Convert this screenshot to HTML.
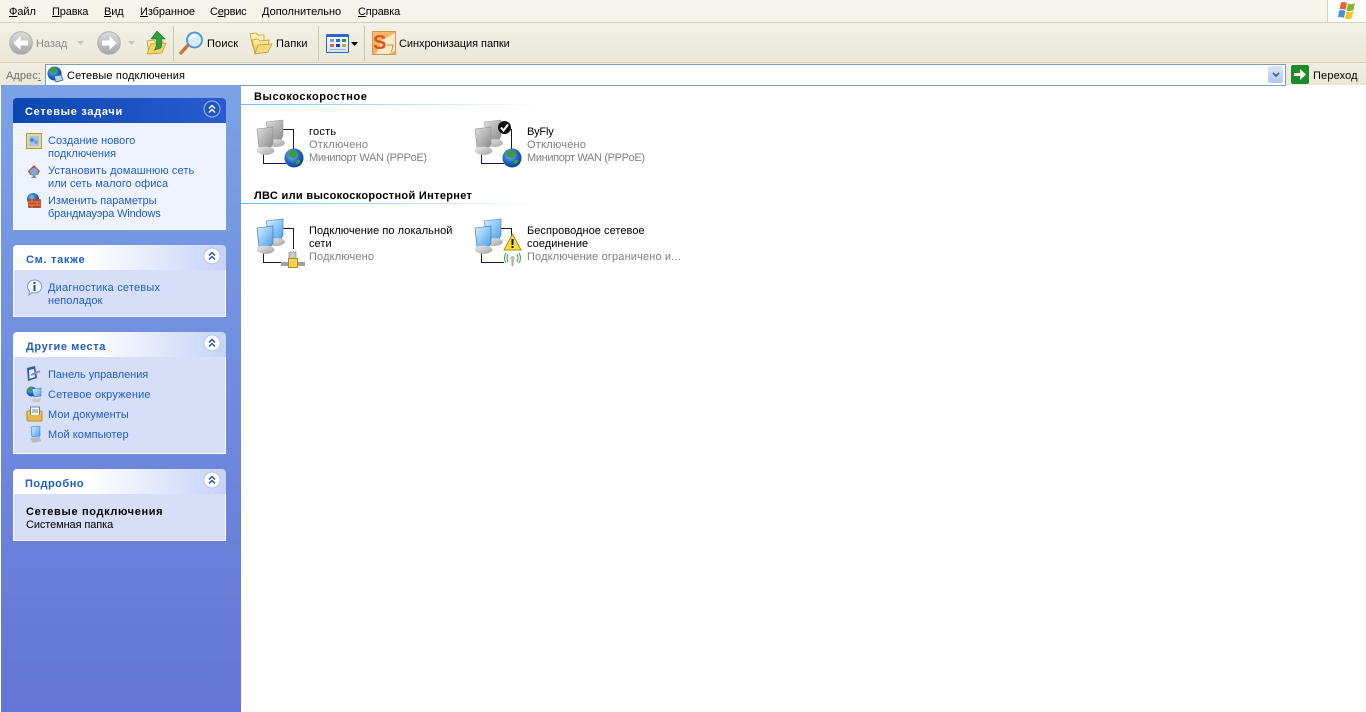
<!DOCTYPE html>
<html lang="ru"><head><meta charset="utf-8"><title>Сетевые подключения</title>
<style>
html,body{margin:0;padding:0;width:1366px;height:712px;overflow:hidden;background:#fff}
body{position:relative;font-family:"Liberation Sans","DejaVu Sans",sans-serif;font-size:11px;color:#000}
div,svg,span.t{position:absolute}
.t{white-space:nowrap;line-height:13px;letter-spacing:.05px;margin-top:1px}
u{text-decoration:underline}
.l{color:#215dc6}
.g{color:#7f7f7f}
.h{font-weight:bold;font-size:11px;letter-spacing:.35px}
.box{left:13px;width:211px;background:#d6dff7;border:1px solid #fff;border-top:0}
.hd{left:13px;width:213px;height:25px;border-radius:4px 4px 0 0;background:linear-gradient(90deg,#fff 0%,#fff 35%,#c6d3f7 100%)}
</style></head><body>
<svg width="0" height="0" style="left:0;top:0"><defs>
<linearGradient id="bs" x1="0" y1="0" x2="1" y2="1"><stop offset="0" stop-color="#d8f0ff"/><stop offset="1" stop-color="#4aa0ea"/></linearGradient>
<linearGradient id="gs" x1="0" y1="0" x2="1" y2="1"><stop offset="0" stop-color="#e0e0e0"/><stop offset="1" stop-color="#8a8a8a"/></linearGradient>
<linearGradient id="bb" x1="0" y1="0" x2="1" y2="1"><stop offset="0" stop-color="#eee"/><stop offset="1" stop-color="#a0a0a0"/></linearGradient>
<radialGradient id="gl" cx=".4" cy=".35" r=".7"><stop offset="0" stop-color="#7fc4f5"/><stop offset=".6" stop-color="#1a63c0"/><stop offset="1" stop-color="#0a3d8f"/></radialGradient>
<linearGradient id="fo" x1="0" y1="0" x2="0" y2="1"><stop offset="0" stop-color="#fff0a8"/><stop offset="1" stop-color="#e6bc4a"/></linearGradient>
<linearGradient id="ar" x1="0" y1="0" x2="0" y2="1"><stop offset="0" stop-color="#dcdcdc"/><stop offset="1" stop-color="#a6a6a6"/></linearGradient>
<symbol id="pcg" viewBox="0 0 48 48" overflow="visible">
<path d="M27 9.500H37.500V30M7.500 30V43.500H30" fill="none" stroke="#15154f" stroke-width="1"/>
<path d="M10 2 27 0V16L25 20 14 21Z" fill="url(#gs)" stroke="#999" stroke-width=".5"/>
<path d="M11 21C20 18 29 19 29 23 27 28 16 28 11 25Z" fill="url(#bb)"/>
<path d="M1 9 17 7V24L15 27 3 28Z" fill="url(#gs)" stroke="#8a8a8a" stroke-width=".5"/>
<path d="M1 28C8 26 18 26 18.500 31 16 36 6 36 1 32Z" fill="url(#bb)"/>
</symbol>
<symbol id="pcb" viewBox="0 0 48 48" overflow="visible">
<path d="M27 9.500H37.500V30M7.500 30V43.500H30" fill="none" stroke="#15154f" stroke-width="1"/>
<path d="M10 2 27 0V16L25 20 14 21Z" fill="url(#bs)" stroke="#3a78c0" stroke-width=".6"/>
<path d="M11 21C20 18 29 19 29 23 27 28 16 28 11 25Z" fill="url(#bb)"/>
<path d="M1 9 17 7V24L15 27 3 28Z" fill="url(#bs)" stroke="#2e6cb8" stroke-width=".6"/>
<path d="M1 28C8 26 18 26 18.500 31 16 36 6 36 1 32Z" fill="url(#bb)"/>
</symbol>
<symbol id="globe" viewBox="0 0 20 20">
<circle cx="10" cy="10" r="9.500" fill="url(#gl)"/>
<path d="M5 4C8 2 12 2 13 4 15 6 12 8 11 10 9 11 8 9 6 9 4 8 4 6 5 4ZM13 12C15 11 17 12 16 14 15 16 13 17 12 16 11 15 12 13 13 12Z" fill="#3f9a3a"/>
</symbol>
<symbol id="chev" viewBox="0 0 18 18">
<circle cx="9" cy="9" r="8" fill="#fff" stroke="#b8c6ee" stroke-width="1"/>
<path d="M6 8.500 9 5.500 12 8.500M6 12.500 9 9.500 12 12.500" fill="none" stroke="#1c4fa8" stroke-width="1.400"/>
</symbol>
<symbol id="chevw" viewBox="0 0 18 18">
<circle cx="9" cy="9" r="8" fill="#1f55c4" stroke="#9db8ec" stroke-width="1"/>
<path d="M6 8.500 9 5.500 12 8.500M6 12.500 9 9.500 12 12.500" fill="none" stroke="#fff" stroke-width="1.400"/>
</symbol>
<symbol id="arrow" viewBox="0 0 24 24">
<circle cx="12" cy="12" r="11.300" fill="url(#ar)" stroke="#b0b0b0"/>
<path d="M4.500 12 11.500 5V9.500H19V14.500H11.500V19Z" fill="#fff"/>
</symbol>
</defs></svg>

<!-- menu bar -->
<div style="left:0;top:0;width:1366px;height:22px;background:#f5f3ea"></div>
<div style="left:0;top:22px;width:1366px;height:1px;background:#d6d2bd"></div>
<div style="left:1327px;top:0;width:39px;height:22px;background:#fff;border-left:1px solid #d6d2bd;box-sizing:border-box"></div>
<svg style="left:1337px;top:1px" width="21" height="19" viewBox="0 0 21 19">
<path d="M4 1.500C6 .5 8 1 10 2L8.500 9C6.500 8 4.500 7.500 2.500 8.500Z" fill="#e8642c"/>
<path d="M11 2.500C13 3.500 15.500 3.500 18 2L16.500 9C14 10.500 11.500 10.500 9.500 9.500Z" fill="#7fba2e"/>
<path d="M2.300 9.500C4.500 8.500 6.500 9 8.300 10L7 17C5 16 3 15.500 1 16.500Z" fill="#4a90dc"/>
<path d="M9.300 10.500C11.500 11.500 14 11.500 16.300 10L15 17C12.500 18.500 10 18.500 8 17.500Z" fill="#f5c422"/>
</svg>
<span class="t" style="left:9px;top:5px;letter-spacing:-.05px"><u>Ф</u>айл</span>
<span class="t" style="left:52px;top:5px;letter-spacing:-.15px"><u>П</u>равка</span>
<span class="t" style="left:104px;top:5px;letter-spacing:-.1px"><u>В</u>ид</span>
<span class="t" style="left:140px;top:5px;letter-spacing:-.1px"><u>И</u>збранное</span>
<span class="t" style="left:210px;top:5px;letter-spacing:-.2px">С<u>е</u>рвис</span>
<span class="t" style="left:262px;top:5px;letter-spacing:0"><u>Д</u>ополнительно</span>
<span class="t" style="left:358px;top:5px;letter-spacing:-.15px"><u>С</u>правка</span>

<!-- toolbar -->
<div style="left:0;top:23px;width:1366px;height:39px;background:linear-gradient(#f3f1e7,#ebe8d8)"></div>
<div style="left:0;top:62px;width:1366px;height:1px;background:#d6d2bd"></div>
<div style="left:173px;top:26px;width:1px;height:35px;background:#c9c6b2"></div>
<div style="left:318px;top:26px;width:1px;height:35px;background:#c9c6b2"></div>
<div style="left:364px;top:26px;width:1px;height:35px;background:#c9c6b2"></div>
<svg style="left:9px;top:31px" width="24" height="24"><use href="#arrow"/></svg>
<span class="t g" style="left:36px;top:37px;color:#8a8a8a;letter-spacing:-.05px">Назад</span>
<svg style="left:77px;top:41px" width="7" height="4"><path d="M0 0H7L3.500 4Z" fill="#c4c4c0"/></svg>
<svg style="left:97px;top:31px" width="24" height="24"><g transform="matrix(-1 0 0 1 24 0)"><use href="#arrow"/></g></svg>
<svg style="left:128px;top:41px" width="7" height="4"><path d="M0 0H7L3.500 4Z" fill="#c4c4c0"/></svg>
<!-- up -->
<svg style="left:146px;top:31px" width="21" height="24" viewBox="0 0 21 24">
<path d="M1 10 8 9 9 11 17 10 15 22 3 23Z" fill="url(#fo)" stroke="#c49a2c" stroke-width=".8"/>
<path d="M1 23 5 13 20 12 16 22Z" fill="#f2d46c" stroke="#c49a2c" stroke-width=".7"/>
<path d="M11 0 19 8H15.500V15C15.500 18 11 18 8.500 19 10.500 16 10.500 14 10.500 8H5Z" fill="#2fa33a" stroke="#1c6f23" stroke-width=".6"/>
</svg>
<!-- search -->
<svg style="left:179px;top:30px" width="26" height="26" viewBox="0 0 26 26">
<path d="M2 23 10 14" stroke="#c27a32" stroke-width="3.500" stroke-linecap="round"/>
<circle cx="15.500" cy="10" r="7.500" fill="#d4ecfb" stroke="#5a8fd0" stroke-width="1.800"/>
<path d="M11 9C12 6.500 15 5 17.500 5.500" stroke="#fff" stroke-width="1.500" fill="none"/>
</svg>
<span class="t" style="left:207px;top:37px;letter-spacing:.15px">Поиск</span>
<!-- folders -->
<svg style="left:249px;top:32px" width="24" height="23" viewBox="0 0 24 23">
<path d="M1 2 7 1 9 3 15 3 15 9 4 15Z" fill="#fbeeb0" stroke="#c49a2c" stroke-width=".8"/>
<path d="M3 8 9 7 11 9 20 8 19 20 6 22Z" fill="url(#fo)" stroke="#c49a2c" stroke-width=".8"/>
<path d="M6 22 9 13 23 12 19 20Z" fill="#f4da7e" stroke="#c49a2c" stroke-width=".7"/>
</svg>
<span class="t" style="left:276px;top:37px;letter-spacing:.15px">Папки</span>
<!-- views -->
<svg style="left:326px;top:34px" width="24" height="19" viewBox="0 0 24 19">
<defs><linearGradient id="vw" x1="0" y1="0" x2="0" y2="1"><stop offset="0" stop-color="#fff"/><stop offset="1" stop-color="#cfe2f8"/></linearGradient></defs>
<rect x=".5" y=".5" width="22" height="18" rx="1" fill="url(#vw)" stroke="#2a68c8"/>
<rect x="1" y="1" width="21" height="2" fill="#2a68c8"/>
<rect x="4" y="5" width="4" height="3" fill="#8c98c8"/><rect x="10" y="5" width="4" height="3" fill="#2f6ec8"/><rect x="16" y="5" width="4" height="3" fill="#2d9a4a"/>
<rect x="4" y="10" width="4" height="3" fill="#e0604a"/><rect x="10" y="10" width="4" height="3" fill="#173e9c"/><rect x="16" y="10" width="4" height="3" fill="#c0a83a"/>
<rect x="4" y="15" width="16" height="1" fill="#a8b8d8"/>
</svg>
<svg style="left:351px;top:42px" width="7" height="4"><path d="M0 0H7L3.500 4Z" fill="#000"/></svg>
<!-- sync -->
<svg style="left:372px;top:31px" width="24" height="24" viewBox="0 0 24 24">
<defs><linearGradient id="sp" x1="0" y1="0" x2="1" y2="1"><stop offset="0" stop-color="#f6bd78"/><stop offset="1" stop-color="#e9a85a"/></linearGradient></defs>
<rect x=".5" y=".5" width="23" height="23" fill="url(#sp)" stroke="#c98a3c" stroke-width=".8"/>
<path d="M10 9 23 2V20L17 23H4L8 15Z" fill="#fff3dc" opacity=".85"/>
<text x="1" y="18" font-family="Liberation Sans" font-weight="bold" font-size="20" fill="#dc5417">S</text>
<path d="M15 14H21L19.500 21" stroke="#b09468" fill="none"/>
</svg>
<span class="t" style="left:399px;top:37px;letter-spacing:-.05px">Синхронизация папки</span>

<!-- address bar -->
<div style="left:0;top:63px;width:1366px;height:22px;background:linear-gradient(#f1efe2,#ebe8d8)"></div>
<span class="t" style="left:6px;top:69px;color:#6e6e66">Адрес<u>:</u></span>
<div style="left:45px;top:64px;width:1239px;height:20px;background:#fff;border:1px solid #7f9db9"></div>
<svg style="left:47px;top:66px" width="17" height="17" viewBox="0 0 17 17">
<circle cx="7.500" cy="7.500" r="7" fill="url(#gl)"/>
<path d="M3 3C5 1 9 1 10 3 11 5 8 6 7 8 5 8 2 6 3 3Z" fill="#3f9a3a"/>
<path d="M7 10 14 9 16 14 9 16Z" fill="#bcd4ee" stroke="#2a5ca8" stroke-width=".8"/>
</svg>
<span class="t" style="left:67px;top:69px;letter-spacing:.15px">Сетевые подключения</span>
<div style="left:1268px;top:66px;width:15px;height:17px;border-radius:2px;background:linear-gradient(#dbe6fb,#b4c7f4)"></div>
<svg style="left:1272px;top:72px" width="8" height="6" viewBox="0 0 8 6"><path d="M1 1 4 4 7 1" fill="none" stroke="#4d6185" stroke-width="1.800"/></svg>
<svg style="left:1291px;top:65px" width="18" height="19" viewBox="0 0 18 19">
<rect width="18" height="19" rx="2" fill="#1e8a2a"/>
<path d="M3 8H9V4L15 9.500 9 15V11H3Z" fill="#fff"/>
</svg>
<span class="t" style="left:1313px;top:69px;letter-spacing:.15px">Переход</span>

<!-- sidebar -->
<div style="left:0;top:85px;width:241px;height:627px;background:linear-gradient(#7ba2e7,#6375d6)"></div>
<div style="left:0;top:85px;width:1px;height:627px;background:#fff"></div>

<div class="hd" style="top:98px;background:linear-gradient(90deg,#0a48b0,#2a5bcf)"></div>
<span class="t h" style="left:25px;top:105px;color:#fff;letter-spacing:.7px">Сетевые задачи</span>
<svg style="left:203px;top:100px" width="18" height="18"><use href="#chevw"/></svg>
<div class="box" style="top:123px;height:106px;background:#eff3ff"></div>
<svg style="left:26px;top:133px" width="16" height="16" viewBox="0 0 16 16">
<rect x=".5" y=".5" width="15" height="15" fill="#e0d8a8" stroke="#b89a3a"/><rect x="3" y="3" width="10" height="10" fill="#a8c4e4"/><circle cx="6" cy="7" r="2" fill="#4c86d0"/><circle cx="10" cy="9" r="2" fill="#6fa0da"/>
</svg>
<span class="t l" style="left:48px;top:134px">Создание нового</span>
<span class="t l" style="left:48px;top:147px">подключения</span>
<svg style="left:26px;top:163px" width="16" height="16" viewBox="0 0 16 16">
<path d="M2 8 8 2 14 8 12 12H4Z" fill="#c9533a"/><circle cx="8" cy="9" r="4" fill="#7aa6dc"/><path d="M5 15H11L8 12Z" fill="#888"/>
</svg>
<span class="t l" style="left:48px;top:164px;letter-spacing:.12px">Установить домашнюю сеть</span>
<span class="t l" style="left:48px;top:177px">или сеть малого офиса</span>
<svg style="left:26px;top:193px" width="16" height="16" viewBox="0 0 16 16">
<circle cx="7" cy="6" r="6" fill="url(#gl)"/><rect x="2" y="6" width="13" height="9" rx="1" fill="#b8492a"/><path d="M2 9H15M2 12H15M6 6V9M11 9V12M6 12V15" stroke="#e8a078" stroke-width=".8"/>
</svg>
<span class="t l" style="left:48px;top:194px;letter-spacing:-.05px">Изменить параметры</span>
<span class="t l" style="left:48px;top:207px;letter-spacing:-.15px">брандмауэра Windows</span>

<div class="hd" style="top:245px"></div>
<span class="t h" style="left:26px;top:253px;color:#215dc6;letter-spacing:.7px">См. также</span>
<svg style="left:203px;top:247px" width="18" height="18"><use href="#chev"/></svg>
<div class="box" style="top:270px;height:46px"></div>
<svg style="left:26px;top:279px" width="17" height="17" viewBox="0 0 17 17">
<path d="M8.500 1A7 6.500 0 1 1 6 13.500L3 16 3.500 12A7 6.500 0 0 1 8.500 1Z" fill="#f4f8ff" stroke="#7a9ad0"/><rect x="7.500" y="6" width="2" height="6" fill="#1c4fa8"/><rect x="7.500" y="3" width="2" height="2" fill="#1c4fa8"/>
</svg>
<span class="t l" style="left:48px;top:281px;letter-spacing:.2px">Диагностика сетевых</span>
<span class="t l" style="left:48px;top:294px">неполадок</span>

<div class="hd" style="top:332px"></div>
<span class="t h" style="left:26px;top:340px;color:#215dc6;letter-spacing:.6px">Другие места</span>
<svg style="left:203px;top:334px" width="18" height="18"><use href="#chev"/></svg>
<div class="box" style="top:357px;height:96px"></div>
<svg style="left:26px;top:366px" width="17" height="16" viewBox="0 0 17 16">
<path d="M1 2 9 0 11 12 2 15Z" fill="#2c5aa8"/><path d="M3 4 8 3 9 11 3.500 13Z" fill="#e8eef8"/><path d="M5 9 14 5" stroke="#8c8cb8" stroke-width="2"/>
</svg>
<span class="t l" style="left:48px;top:368px;letter-spacing:-.05px">Панель управления</span>
<svg style="left:26px;top:386px" width="17" height="17" viewBox="0 0 17 17">
<circle cx="5.500" cy="5.500" r="5" fill="url(#gl)"/><path d="M2 3C4 1 7 1 7 4 6 6 3 6 2 3Z" fill="#3f9a3a"/><path d="M6 3 15 2V10L8 11Z" fill="url(#bs)" stroke="#2e6cb8" stroke-width=".5"/><path d="M6 13 15 12 14 16 7 16Z" fill="#c8c8c8"/>
</svg>
<span class="t l" style="left:48px;top:388px;letter-spacing:.15px">Сетевое окружение</span>
<svg style="left:26px;top:406px" width="17" height="16" viewBox="0 0 17 16">
<rect x="1" y="5" width="15" height="10" rx="1" fill="#f0c860" stroke="#b98d22"/><rect x="4.500" y="1" width="9" height="9" fill="#fff" stroke="#6a7fa8"/><path d="M6 4H12M6 6H12" stroke="#6a7fa8"/><rect x="1.500" y="9" width="14" height="5.500" fill="#e6b84a"/>
</svg>
<span class="t l" style="left:48px;top:408px">Мои документы</span>
<svg style="left:28px;top:426px" width="14" height="17" viewBox="0 0 14 17">
<path d="M3 1 12 0V10L4 11Z" fill="url(#bs)" stroke="#2e6cb8" stroke-width=".5"/><path d="M2 12 12 11 13 15 5 17Z" fill="#b8b8c0"/>
</svg>
<span class="t l" style="left:48px;top:428px">Мой компьютер</span>

<div class="hd" style="top:469px"></div>
<span class="t h" style="left:25px;top:477px;color:#215dc6;letter-spacing:.5px">Подробно</span>
<svg style="left:203px;top:471px" width="18" height="18"><use href="#chev"/></svg>
<div class="box" style="top:494px;height:46px"></div>
<span class="t h" style="left:26px;top:505px;letter-spacing:.65px">Сетевые подключения</span>
<span class="t" style="left:26px;top:518px;letter-spacing:-.1px">Системная папка</span>

<!-- main -->
<span class="t h" style="left:254px;top:90px;letter-spacing:.55px">Высокоскоростное</span>
<div style="left:241px;top:104px;width:300px;height:1px;background:linear-gradient(90deg,#70bfff,#fff)"></div>
<svg style="left:256px;top:120px" width="48" height="48" overflow="visible"><use href="#pcg"/></svg>
<svg style="left:284px;top:148px" width="20" height="20"><use href="#globe"/></svg>
<span class="t" style="left:309px;top:125px;letter-spacing:.25px">гость</span>
<span class="t g" style="left:309px;top:138px;letter-spacing:.25px">Отключено</span>
<span class="t g" style="left:309px;top:151px;letter-spacing:-.35px">Минипорт WAN (PPPoE)</span>

<svg style="left:474px;top:120px" width="48" height="48" overflow="visible"><use href="#pcg"/></svg>
<svg style="left:502px;top:148px" width="20" height="20"><use href="#globe"/></svg>
<svg style="left:498px;top:121px" width="13" height="13" viewBox="0 0 13 13"><circle cx="6.500" cy="6.500" r="6.500" fill="#111"/><path d="M3 6.500 5.500 9.500 10 3.500" fill="none" stroke="#fff" stroke-width="2"/></svg>
<span class="t" style="left:527px;top:125px;letter-spacing:-.2px">ByFly</span>
<span class="t g" style="left:527px;top:138px;letter-spacing:.25px">Отключено</span>
<span class="t g" style="left:527px;top:151px;letter-spacing:-.35px">Минипорт WAN (PPPoE)</span>

<span class="t h" style="left:254px;top:189px;letter-spacing:.32px">ЛВС или высокоскоростной Интернет</span>
<div style="left:241px;top:203px;width:300px;height:1px;background:linear-gradient(90deg,#70bfff,#fff)"></div>
<svg style="left:256px;top:219px" width="48" height="48" overflow="visible"><use href="#pcb"/></svg>
<svg style="left:281px;top:251px" width="24" height="18" viewBox="0 0 24 18">
<rect x="0" y="11" width="24" height="4" fill="#a0a0a0"/><rect x="8" y="1" width="7" height="7" fill="#c8c8c8" stroke="#777" stroke-width=".6"/><rect x="7.500" y="7.500" width="9" height="9" fill="#f2d24e" stroke="#b08c1e"/>
</svg>
<span class="t" style="left:309px;top:224px">Подключение по локальной</span>
<span class="t" style="left:309px;top:237px">сети</span>
<span class="t g" style="left:309px;top:250px;letter-spacing:.15px">Подключено</span>

<svg style="left:474px;top:219px" width="48" height="48" overflow="visible"><use href="#pcb"/></svg>
<svg style="left:503px;top:233px" width="19" height="34" viewBox="0 0 19 34">
<path d="M9.500 1 18 17H1Z" fill="#f8e23a" stroke="#a88a10" stroke-linejoin="round"/><rect x="8.500" y="6" width="2" height="6" fill="#111"/><rect x="8.500" y="13" width="2" height="2" fill="#111"/>
<path d="M9.500 25V33" stroke="#a8a8c8" stroke-width="2"/><circle cx="9.500" cy="25" r="2" fill="#bbb"/>
<path d="M5 21Q3 25 5 29M14 21Q16 25 14 29M3 20Q0 25 3 30M16 20Q19 25 16 30" fill="none" stroke="#3aa03a"/>
</svg>
<span class="t" style="left:527px;top:224px">Беспроводное сетевое</span>
<span class="t" style="left:527px;top:237px">соединение</span>
<span class="t g" style="left:527px;top:250px;letter-spacing:.15px">Подключение ограничено и...</span>
</body></html>
